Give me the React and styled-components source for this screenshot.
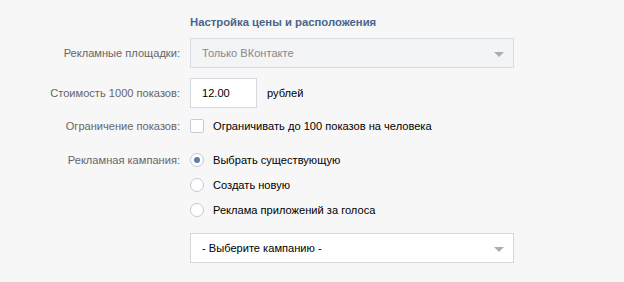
import React from "react";
import styled, { createGlobalStyle } from "styled-components";

const GlobalStyle = createGlobalStyle`
  html, body {
    margin: 0;
    padding: 0;
    background: #f7f7f7;
  }
  body {
    font-family: "Liberation Sans", Arial, sans-serif;
    font-size: 11.1px;
    color: #000;
  }
`;

const Page = styled.div`
  width: 624px;
  height: 282px;
  padding-top: 14px;
  box-sizing: border-box;
  background: #f7f7f7;
`;

const Title = styled.h2`
  margin: 0 0 8px 190px;
  font-size: 11.3px;
  line-height: 16px;
  font-weight: bold;
  color: #4a6589;
`;

const Row = styled.div`
  display: grid;
  grid-template-columns: 180px 324px;
  column-gap: 10px;
  align-items: center;
  margin-top: ${(p) => p.$mt || 0}px;
  height: ${(p) => p.$h || 16}px;
`;

const Label = styled.div`
  text-align: right;
  color: #666;
  white-space: nowrap;
`;

const Control = styled.div`
  display: flex;
  align-items: center;
  height: 100%;
`;

const SelectBox = styled.div`
  position: relative;
  box-sizing: border-box;
  width: 324px;
  height: 30px;
  display: flex;
  align-items: center;
  padding: 0 11px;
  border: 1px solid ${(p) => (p.$disabled ? "#d7dce2" : "#d3d9de")};
  background: ${(p) => (p.$disabled ? "#f3f4f6" : "#fff")};
  color: ${(p) => (p.$disabled ? "#888" : "#000")};
`;

const Arrow = styled.span`
  position: absolute;
  right: 9px;
  top: 13px;
  width: 0;
  height: 0;
  border-left: 5px solid transparent;
  border-right: 5px solid transparent;
  border-top: 5px solid #a9aeb6;
`;

const TextInput = styled.div`
  box-sizing: border-box;
  width: 67px;
  height: 30px;
  display: flex;
  align-items: center;
  padding: 0 11px;
  border: 1px solid #d3d9de;
  background: #fff;
`;

const Unit = styled.span`
  margin-left: 10px;
`;

const Checkbox = styled.span`
  box-sizing: border-box;
  width: 14px;
  height: 14px;
  border: 1px solid #c5ced8;
  border-radius: 2px;
  background: #fff;
  margin-right: 9px;
  flex: none;
`;

const Radio = styled.span`
  box-sizing: border-box;
  width: 14px;
  height: 14px;
  border: 1px solid #c1cad4;
  border-radius: 50%;
  background: #fff;
  margin-right: 9px;
  flex: none;
  display: flex;
  align-items: center;
  justify-content: center;
  &::after {
    content: "";
    width: 6px;
    height: 6px;
    border-radius: 50%;
    background: ${(p) => (p.$checked ? "#5d7fa7" : "transparent")};
  }
`;

const Option = styled.span`
  white-space: nowrap;
`;

export default function App() {
  return (
    <Page>
      <GlobalStyle />
      <Title>Настройка цены и расположения</Title>

      <Row $h={30}>
        <Label>Рекламные площадки:</Label>
        <Control>
          <SelectBox $disabled>
            Только ВКонтакте
            <Arrow />
          </SelectBox>
        </Control>
      </Row>

      <Row $h={30} $mt={10}>
        <Label>Стоимость 1000 показов:</Label>
        <Control>
          <TextInput>12.00</TextInput>
          <Unit>рублей</Unit>
        </Control>
      </Row>

      <Row $mt={10}>
        <Label>Ограничение показов:</Label>
        <Control>
          <Checkbox />
          <Option>Ограничивать до 100 показов на человека</Option>
        </Control>
      </Row>

      <Row $mt={18}>
        <Label>Рекламная кампания:</Label>
        <Control>
          <Radio $checked />
          <Option>Выбрать существующую</Option>
        </Control>
      </Row>

      <Row $mt={9}>
        <Label />
        <Control>
          <Radio />
          <Option>Создать новую</Option>
        </Control>
      </Row>

      <Row $mt={9}>
        <Label />
        <Control>
          <Radio />
          <Option>Реклама приложений за голоса</Option>
        </Control>
      </Row>

      <Row $h={30} $mt={15}>
        <Label />
        <Control>
          <SelectBox>
            - Выберите кампанию -
            <Arrow />
          </SelectBox>
        </Control>
      </Row>
    </Page>
  );
}
